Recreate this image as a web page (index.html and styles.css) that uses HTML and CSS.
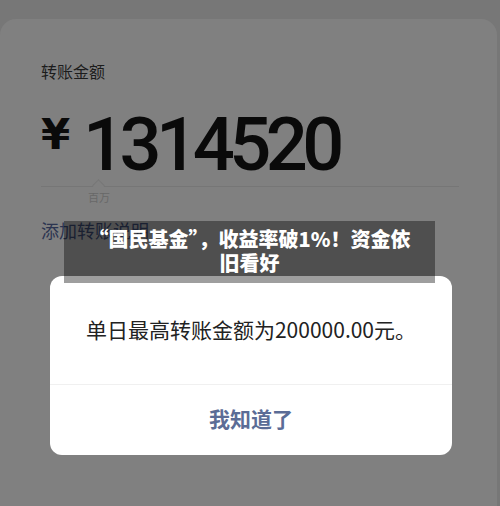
FILE: index.html
```html
<!DOCTYPE html>
<html lang="zh-CN">
<head>
    <meta charset="UTF-8">
    <meta name="viewport" content="width=device-width, initial-scale=1.0">
    <title>转账金额</title>
    <link rel="stylesheet" href="styles.css">
</head>
<body>
    <div class="sheet">
        <div class="label">转账金额</div>

        <div class="amount">
            <span class="currency">¥</span>
            <span class="number">1314520</span>
        </div>

        <div class="amount-line">
            <span class="notch"></span>
        </div>
        <div class="unit">百万</div>

        <div class="remark">添加转账说明</div>
    </div>

    <div class="caption">“国民基金”，收益率破1%！资金依旧看好</div>

    <div class="dialog">
        <div class="dialog-message">单日最高转账金额为200000.00元。</div>
        <button class="dialog-btn">我知道了</button>
    </div>
</body>
</html>
```

FILE: styles.css
```css
/* Reset */
* {
    margin: 0;
    padding: 0;
    box-sizing: border-box;
}

body {
    font-family: 'Noto Sans CJK SC', 'Noto Sans', sans-serif;
    background: #777777;
    width: 500px;
    height: 506px;
    overflow: hidden;
    position: relative;
    padding-top: 19px;
}

/* Dimmed transfer sheet */
.sheet {
    background: #808080;
    width: 497px;
    height: 487px;
    border-radius: 16px 16px 0 0;
    padding: 41px 38px 0 41px;
}

.label {
    font-size: 16px;
    line-height: 22px;
    color: #1c1c1c;
}

.amount {
    display: flex;
    align-items: flex-start;
    margin-top: 31px;
    color: #0a0a0a;
}

.currency {
    font-family: 'DejaVu Sans', sans-serif;
    font-size: 42px;
    font-weight: bold;
    line-height: 46px;
    margin-top: -1px;
    width: 42px;
}

.number {
    font-family: Roboto, sans-serif;
    font-size: 74px;
    font-weight: 500;
    line-height: 62px;
    letter-spacing: -5.5px;
    margin-top: 1px;
}

.amount-line {
    position: relative;
    height: 1px;
    background: #767676;
    margin-top: 10px;
}

.notch {
    position: absolute;
    left: 53px;
    top: -5px;
    width: 9px;
    height: 9px;
    border-left: 1px solid #767676;
    border-top: 1px solid #767676;
    background: #808080;
    transform: rotate(45deg);
}

.unit {
    font-size: 11px;
    line-height: 14px;
    color: #686868;
    margin: 3px 0 0 47px;
}

.remark {
    font-size: 18px;
    line-height: 24px;
    color: #2b3450;
    margin-top: 14px;
}

/* News caption overlay */
.caption {
    position: absolute;
    left: 64px;
    top: 221px;
    width: 371px;
    height: 62px;
    padding: 6px 24px;
    background: rgba(0, 0, 0, 0.38);
    color: #ffffff;
    font-size: 20px;
    font-weight: 900;
    line-height: 24px;
    text-align: center;
    z-index: 3;
}

/* Alert dialog */
.dialog {
    position: absolute;
    left: 50px;
    top: 276px;
    width: 402px;
    height: 179px;
    background: #ffffff;
    border-radius: 12px;
    display: flex;
    flex-direction: column;
    z-index: 2;
}

.dialog-message {
    height: 109px;
    display: flex;
    align-items: center;
    justify-content: center;
    font-size: 21px;
    color: #222222;
    border-bottom: 1px solid #f0f0f0;
    padding-bottom: 2px;
}

.dialog-btn {
    flex: 1;
    border: none;
    background: transparent;
    font-family: inherit;
    font-size: 21px;
    font-weight: bold;
    color: #5b6c96;
    padding-bottom: 4px;
}
```
